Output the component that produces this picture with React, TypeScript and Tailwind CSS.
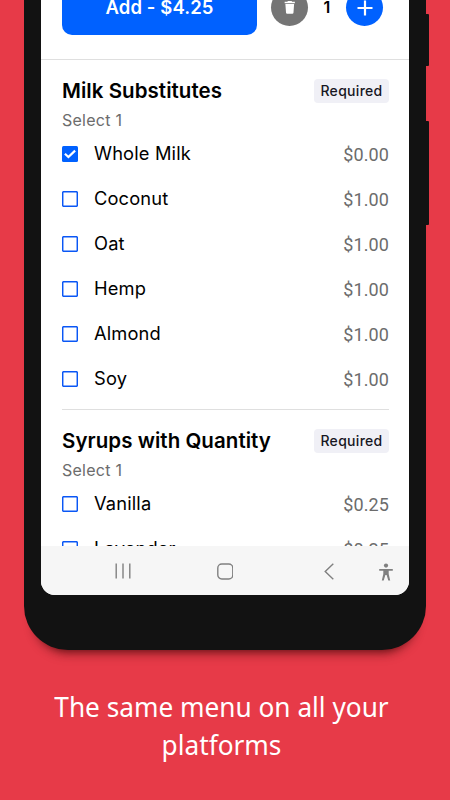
type Option = { name: string; price: string; checked?: boolean }
type Group = { title: string; hint: string; options: Option[] }

const GROUPS: Group[] = [
  {
    title: 'Milk Substitutes',
    hint: 'Select 1',
    options: [
      { name: 'Whole Milk', price: '$0.00', checked: true },
      { name: 'Coconut', price: '$1.00' },
      { name: 'Oat', price: '$1.00' },
      { name: 'Hemp', price: '$1.00' },
      { name: 'Almond', price: '$1.00' },
      { name: 'Soy', price: '$1.00' },
    ],
  },
  {
    title: 'Syrups with Quantity',
    hint: 'Select 1',
    options: [
      { name: 'Vanilla', price: '$0.25' },
      { name: 'Lavender', price: '$0.25' },
    ],
  },
]

function Checkbox({ checked }: { checked?: boolean }) {
  return (
    <svg viewBox="0 0 16 16" className="size-4 shrink-0" fill="none">
      {checked ? (
        <>
          <rect width="16" height="16" rx="1.5" fill="#0061ff" />
          <path d="M2.9 7.8 6.4 11.1 13.1 4.6" stroke="white" strokeWidth="2.2" />
        </>
      ) : (
        <rect x=".7" y=".7" width="14.6" height="14.6" rx="1" stroke="#0a57f5" strokeWidth="1.5" />
      )}
    </svg>
  )
}

function OrderBar() {
  return (
    <div className="flex h-[59px] items-end pl-[21px]">
      <button className="mb-[24.5px] flex h-[54px] w-[195px] shrink-0 items-center justify-center rounded-[10px] bg-[#0061ff] text-[18.5px] font-semibold tracking-[0.1px] text-white">
        <span>Add - $4.25</span>
      </button>
      <button className="mb-[33px] ml-[14px] flex size-[37px] shrink-0 items-center justify-center rounded-full bg-[#757575]">
        <svg viewBox="0 0 12 14" className="h-[13px] w-[11.5px]" fill="white">
          <path d="M4 0h4l.6.8H11.5v1.5H.5V.8h2.9zM1.3 3.2h9.4L10 12.6q-.1 1.1-1.2 1.1H3.2Q2.1 13.7 2 12.6z" />
        </svg>
      </button>
      <span className="mb-10 w-[38px] text-center text-[16px] leading-6 font-semibold">1</span>
      <button className="mb-[33px] flex size-[37px] shrink-0 items-center justify-center rounded-full bg-[#0061ff]">
        <svg viewBox="0 0 16 16" className="size-4" stroke="white" strokeWidth="2.2">
          <path d="M8 .5v15M.5 8h15" />
        </svg>
      </button>
    </div>
  )
}

function OptionGroup({ group }: { group: Group }) {
  return (
    <section className="pr-5 pl-[21px]">
      <div className="flex h-12 items-end justify-between">
        <h2 className="mb-1 text-[20.5px] leading-6 font-semibold tracking-[0.05px] whitespace-nowrap">{group.title}</h2>
        <span className="mb-1 flex h-6 w-[75px] items-center justify-center rounded-[4px] bg-[#f0f0f6] pb-px text-[14px] font-medium tracking-[0.3px] text-[#17171f]">
          Required
        </span>
      </div>
      <p className="h-6 pt-px text-[16px] leading-6 tracking-[0.25px] text-[#6c6c6c]">{group.hint}</p>
      {group.options.map(o => (
        <div key={o.name} className="flex h-[45px] items-center">
          <Checkbox checked={o.checked} />
          <span className="ml-4 flex-1 text-[18.3px] tracking-[0.15px]">{o.name}</span>
          <span className="mt-0.5 font-['Roboto'] text-[18px] tracking-[0.1px] text-[#6c6c6c]">{o.price}</span>
        </div>
      ))}
    </section>
  )
}

function NavBar() {
  return (
    <div className="flex h-[49px] shrink-0 items-start bg-[#f6f6f6] pt-[17px] text-[#808080]">
      <svg viewBox="0 0 16 16" className="ml-[74px] h-4 w-4" stroke="currentColor" strokeWidth="1.4">
        <path d="M1.2 .5v15M8 .5v15M14.8 .5v15" />
      </svg>
      <svg viewBox="0 0 17 17" className="ml-[85px] size-[17px]" fill="none" stroke="currentColor" strokeWidth="1.4">
        <rect x="1.8" y="1" width="15" height="15" rx="4" />
      </svg>
      <svg viewBox="0 0 10 17" className="ml-[91px] h-[17px] w-[10px]" fill="none" stroke="currentColor" strokeWidth="1.4">
        <path d="M9.3.7 1.2 8.5l8.100 7.800" />
      </svg>
      <svg viewBox="0 0 14 18" className="ml-[45px] h-[18px] w-[14px]" fill="currentColor">
        <circle cx="7" cy="2.6" r="2.1" />
        <path d="M.2 6.1h13.6v1.7H9.7V11l1.5 6.500H9.300L7.600 12H6.400l-1.700 5.500H2.800L4.300 11V7.800H.2z" />
      </svg>
    </div>
  )
}

export default function App() {
  return (
    <div className="flex h-[800px] w-[450px] flex-col overflow-hidden bg-[#e73a48] font-['Inter',sans-serif] text-black">
      <div className="relative ml-6 h-[650px] w-[402px] shrink-0 rounded-b-[44px] bg-[#121212] px-[17px] shadow-[0_12px_10px_-11px_rgba(40,0,0,0.65),0_14px_12px_-10px_rgba(60,0,0,0.25)]">
        {/* side buttons */}
        <span className="absolute top-[14px] -right-[3px] h-[52px] w-1 rounded-r-[1px] bg-[#121212]" />
        <span className="absolute top-[121px] -right-[3px] h-[104px] w-1 rounded-r-[1px] bg-[#121212]" />

        <div className="flex h-[595px] flex-col overflow-hidden rounded-b-[14px] bg-white">
          <div className="min-h-0 flex-1 overflow-hidden">
            <OrderBar />
            <div className="h-px bg-[#dfdfdf]" />
            <div className="-mt-px">
              <OptionGroup group={GROUPS[0]} />
              <div className="mt-2 mr-5 ml-[21px] h-px bg-[#dfdfdf]" />
              <div className="-mt-px">
                <OptionGroup group={GROUPS[1]} />
              </div>
            </div>
          </div>
          <NavBar />
        </div>
      </div>

      <p className="mt-[38px] mr-[7px] scale-x-[0.953] text-center font-['Noto_Sans',sans-serif] text-[27.5px] leading-[37.5px] text-white">
        The same menu on all your
        <br />
        platforms
      </p>
    </div>
  )
}
